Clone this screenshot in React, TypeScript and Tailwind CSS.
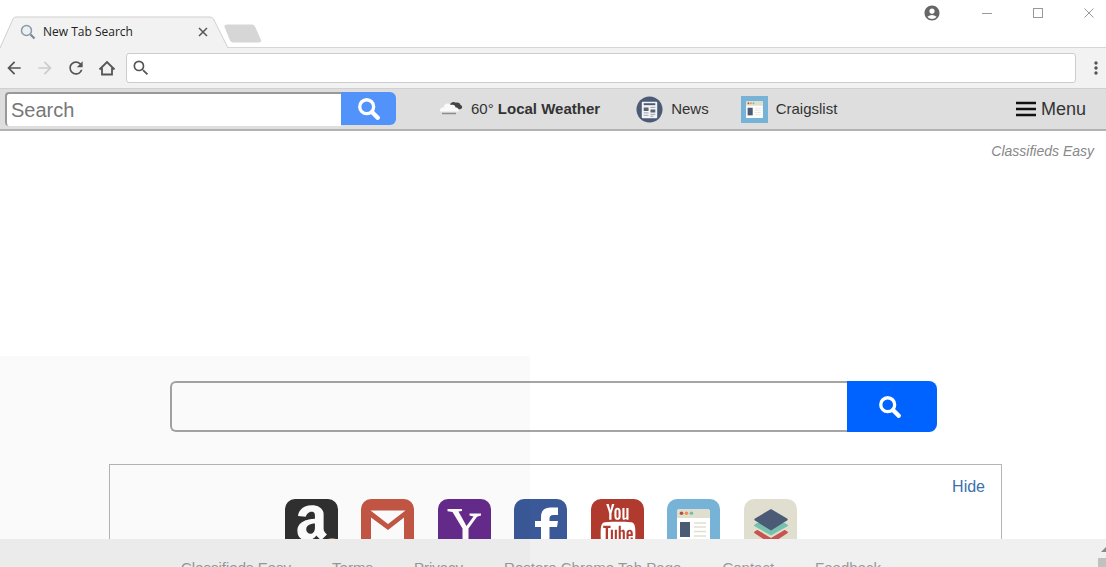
import React from 'react';
import { FaAmazon } from 'react-icons/fa';
import { TfiYoutube } from 'react-icons/tfi';
import { MdAccountCircle, MdArrowBack, MdArrowForward, MdMoreVert, MdRefresh, MdSearch } from 'react-icons/md';

const footerLinks = ['Classifieds Easy', 'Terms', 'Privacy', 'Restore Chrome Tab Page', 'Contact', 'Feedback'];

const SearchGlyph: React.FC<{ className: string }> = ({ className }) => (
  <svg viewBox="0 0 24 24" className={className} fill="none" stroke="currentColor" aria-hidden="true">
    <circle cx="9.500" cy="9.500" r="7.600" strokeWidth="3.600" />
    <path d="M15.500 15.500 21.500 21.500" strokeWidth="4.800" strokeLinecap="round" />
  </svg>
);

const WeatherIcon = () => (
  <svg viewBox="0 0 24 16" className="h-4 w-6" aria-hidden="true">
    <path d="M11 3.500C12 .8 15 .3 17 1.800c2-.6 4 .4 4.300 2 2.200.8 2.500 3 .7 4.200-3 1-7 .5-10-1.500z" fill="#454545" />
    <path d="M1 10.500c-.8-2.500 1.500-4 3.500-4C5 2.500 9.500 1 12 4c2.500-1 4.500.7 4.500 2.500 2.500 0 4 2 3 4z" fill="#fafafa" />
    <path d="M3 12.500h14" stroke="#8d8d8d" strokeWidth="1.500" />
  </svg>
);

const NewsIcon = () => (
  <svg viewBox="0 0 28 28" className="size-[27px]" aria-hidden="true">
    <circle cx="14" cy="14" r="13.500" fill="#4b5a75" />
    <rect x="6" y="6" width="16" height="17" rx="1" fill="#f2f4f6" />
    <path d="M8 8.500h12" stroke="#4b5a75" strokeWidth="2" />
    <path d="M8 12h5v3.500H8zM15 14h5v3h-5z" fill="#5c6470" />
    <path d="M15 11.800h5M8 17.500h5M8 20h5M15 19h5M15 21h3" stroke="#9aa1ab" strokeWidth="1" />
  </svg>
);

// Shared by the toolbar link and the tile; the caller sets the size
const BrowserIcon: React.FC<{ className: string }> = ({ className }) => (
  <svg viewBox="0 0 53 53" className={className} aria-hidden="true">
    <rect width="53" height="53" fill="#76b3d6" />
    <path d="M10 43V13q0-3 3-3h27q3 0 3 3v30z" fill="#fff" />
    <path d="M10 19v-6q0-3 3-3h27q3 0 3 3v6z" fill="#e0dfcf" />
    <circle cx="14.500" cy="14.300" r="1.800" fill="#b0503f" />
    <circle cx="19.500" cy="14.300" r="1.800" fill="#ef8f4c" />
    <circle cx="24.500" cy="14.300" r="1.800" fill="#74c1a0" />
    <rect x="13" y="23" width="10" height="15" fill="#4b5a75" />
    <path d="M27 24h12M27 28h12M27 32.500h12M27 37h12" stroke="#e0dfcf" strokeWidth="1.400" />
  </svg>
);

const AmazonTile = () => (
  <svg viewBox="0 0 53 53" className="size-[53px]" aria-hidden="true">
    <rect width="53" height="53" fill="#303030" />
    <FaAmazon x="0" y="3" size={53} color="#fff" />
    <path d="M41 41q5-3 10-1v3H41z" fill="#e8a765" />
  </svg>
);

const GmailTile = () => (
  <svg viewBox="0 0 53 53" className="size-[53px]" aria-hidden="true">
    <rect width="53" height="53" fill="#c55746" />
    <path d="M9.500 11.500h35L27 25z" fill="#fff" />
    <path d="M10 45V18.500L27 31l16-12.500V45z" fill="#fff" />
  </svg>
);

const YahooTile = () => (
  <svg viewBox="0 0 53 53" className="size-[53px]" aria-hidden="true">
    <rect width="53" height="53" fill="#652b8c" />
    <path
      d="M9.500 10H24v2l-3.500.6L28.500 27 35.500 17.500 31.500 16.500V14.500H43v2l-4 1.200-8.500 11.800V45h-6V29.500L14.500 13l-5-.8z"
      fill="#fff"
    />
  </svg>
);

const FacebookTile = () => (
  <svg viewBox="0 0 53 53" className="size-[53px]" aria-hidden="true">
    <rect width="53" height="53" fill="#3b5998" />
    <path d="M27 53V28h-6v-6h6v-4q0-9.500 9.500-9.500H44V16h-5q-3.500 0-3.500 3.500V22H44l-1 6h-7.500v25z" fill="#fff" />
  </svg>
);

const YoutubeTile = () => (
  <svg viewBox="0 0 53 53" className="size-[53px]" aria-hidden="true">
    <rect width="53" height="53" fill="#b03a2e" />
    <TfiYoutube x="6" y="5" size={42} color="#fff" />
  </svg>
);

const StackTile = () => (
  <svg viewBox="0 0 53 53" className="size-[53px]" aria-hidden="true">
    <rect width="53" height="53" fill="#e0dfcf" />
    <path d="M10 33l3-2h28l3 2q0 1-1 1.500L27 45 11 34.500q-1-.5-1-1.500z" fill="#c75450" />
    <path d="M10 28l3-2h28l3 2q0 1-1 1.500L27 39 11 29.500q-1-.5-1-1.500z" fill="#e0dfcf" />
    <path d="M10 26l3-2h28l3 2q0 1-1 1.500L27 36.500 11 27.500q-1-.5-1-1.500z" fill="#76c2af" />
    <path d="M27 10 43 19.500q1.500 1 0 2L27 31.500 11 21.500q-1.500-1 0-2z" fill="#4b5a75" />
  </svg>
);

const tiles = [
  { name: 'Amazon', icon: <AmazonTile /> },
  { name: 'Gmail', icon: <GmailTile /> },
  { name: 'Yahoo', icon: <YahooTile /> },
  { name: 'Facebook', icon: <FacebookTile /> },
  { name: 'YouTube', icon: <YoutubeTile /> },
  { name: 'Craigslist', icon: <BrowserIcon className="size-[53px]" /> },
  { name: 'More', icon: <StackTile /> },
];

const TitleBar = () => (
  <div className="flex h-12 items-end justify-between border-b border-[#d6d6d6] bg-white">
    <div className="-mb-px flex items-end">
      <div className="relative flex h-8 w-[228px] items-center pr-5 pl-5">
        <svg viewBox="0 0 228 32" className="absolute inset-0 h-8 w-[228px]" aria-hidden="true">
          <path d="M0 32 13 3Q14 1 16 1H210Q212 1 213.500 3L228 32" fill="#f2f2f2" stroke="#cfcfcf" />
        </svg>
        <svg viewBox="0 0 16 16" className="relative size-4" fill="none" aria-hidden="true">
          <circle cx="6.500" cy="6.500" r="5" fill="#e9f1f6" stroke="#8d9aa3" strokeWidth="1.500" />
          <path d="M10.500 10.500 14.500 14.500" stroke="#7b8790" strokeWidth="2.200" />
        </svg>
        <span className="relative ml-[7px] flex-1 font-['Open_Sans',sans-serif] text-xs text-[#222]">New Tab Search</span>
        <button aria-label="Close tab" className="relative">
          <svg viewBox="0 0 10 10" className="size-[10px]" stroke="#555" strokeWidth="1.500">
            <path d="M1 1 9 9M9 1 1 9" />
          </svg>
        </button>
      </div>
      <button aria-label="New tab" className="-ml-1 mb-1">
        <svg viewBox="0 0 38 20" className="h-5 w-[38px]">
          <path d="M3 .5H28q2 0 3 2l6 13.500q1 2.500-2 2.500H9q-2 0-3-2L.5 3Q0 .5 3 .5z" fill="#d6d6d6" />
        </svg>
      </button>
    </div>
    <div className="mr-3 flex items-center gap-[41px] self-start pt-1 text-[#999]">
      <button aria-label="Profile">
        <MdAccountCircle className="size-[18px] text-[#666]" />
      </button>
      <button aria-label="Minimize">
        <svg viewBox="0 0 10 10" className="size-[10px]" fill="none" stroke="currentColor">
          <path d="M0 5.500H10" />
        </svg>
      </button>
      <button aria-label="Maximize">
        <svg viewBox="0 0 10 10" className="size-[10px]" fill="none" stroke="currentColor">
          <rect x=".5" y=".5" width="9" height="9" />
        </svg>
      </button>
      <button aria-label="Close">
        <svg viewBox="0 0 10 10" className="size-[10px]" fill="none" stroke="currentColor">
          <path d="M.5.5 9.500 9.500M9.500.5.5 9.500" />
        </svg>
      </button>
    </div>
  </div>
);

const AddressBar = () => (
  <div className="flex h-[41px] items-center border-b border-[#d0d0d0] bg-[#f2f2f2] pl-1 text-[#555]">
    <div className="flex items-center gap-[11px]">
      <button aria-label="Back"><MdArrowBack className="size-5" /></button>
      <button aria-label="Forward"><MdArrowForward className="size-5 text-[#ccc]" /></button>
      <button aria-label="Reload"><MdRefresh className="size-5" /></button>
      <button aria-label="Home">
        <svg viewBox="0 0 20 20" className="size-5" fill="none" stroke="currentColor" strokeWidth="1.800">
          <path d="M2.500 11.500 10 4l7.500 7.500M5 10v6.500h10V10" />
        </svg>
      </button>
    </div>
    <div className="ml-[9px] flex h-[30px] flex-1 items-center rounded-[3px] border border-[#ccc] bg-white pl-1">
      <MdSearch className="size-5" />
      <input aria-label="Address" className="min-w-0 flex-1 px-2 text-sm outline-none" />
    </div>
    <button aria-label="Browser menu" className="ml-[10px]"><MdMoreVert className="size-5" /></button>
  </div>
);

const AppBar = () => (
  <div className="flex h-[42px] items-center border-b-2 border-[#b2b2b2] bg-[#dedede] pr-5 pl-[5px] text-[15px] text-[#333]">
    <form className="flex">
      <input
        type="text"
        aria-label="Search"
        placeholder="Search"
        className="h-[34px] w-[336px] rounded-l-[4px] border-t-2 border-l-2 border-[#999] bg-white px-1 text-xl outline-none placeholder:text-[#777]"
      />
      <button aria-label="Search the web" className="flex h-[33px] w-[55px] items-center justify-center rounded-r-md bg-[#5193fa] text-white">
        <SearchGlyph className="size-[22px]" />
      </button>
    </form>
    <a href="#weather" className="ml-[43px] flex items-center gap-2">
      <WeatherIcon />
      <span>60° <strong>Local Weather</strong></span>
    </a>
    <a href="#news" className="ml-9 flex items-center gap-2">
      <NewsIcon />
      News
    </a>
    <a href="#craigslist" className="ml-8 flex items-center gap-2">
      <BrowserIcon className="size-[27px]" />
      Craigslist
    </a>
    <button className="ml-auto flex items-center gap-[5px] text-lg">
      <svg viewBox="0 0 20 16" className="h-4 w-5" stroke="#111" strokeWidth="2.400">
        <path d="M0 2H20M0 8H20M0 14H20" />
      </svg>
      Menu
    </button>
  </div>
);

const App: React.FC = () => {
  return (
    <div className="relative flex h-screen flex-col overflow-hidden bg-white font-['Liberation_Sans',Arial,sans-serif]">
      <TitleBar />
      <AddressBar />
      <AppBar />
      <main className="flex min-h-0 flex-1 flex-col overflow-hidden">
        <p className="mt-[10px] mr-3 text-right text-sm text-[#888] italic">Classifieds Easy</p>
        <form className="mt-[220px] mr-[169px] ml-[170px] flex h-[51px] shrink-0">
          <input
            type="text"
            aria-label="Web search"
            className="min-w-0 flex-1 rounded-l-md border-2 border-r-0 border-[#a5a5a5] bg-white px-3 text-xl outline-none"
          />
          <button aria-label="Search" className="flex w-[90px] items-center justify-center rounded-r-lg bg-[#0062ff] pr-1 text-white">
            <SearchGlyph className="size-[22px]" />
          </button>
        </form>
        <section className="mt-8 mr-[104px] ml-[109px] h-40 shrink-0 border border-[#b5b5b5]">
          <div className="flex justify-end px-4 pt-[10px]">
            <button className="text-base text-[#3a70ae]">Hide</button>
          </div>
          <div className="flex justify-center pr-[6px]">
            <div className="grid w-[536px] grid-cols-7">
              {tiles.map((tile) => (
                <a key={tile.name} href="#tile" aria-label={tile.name} className="size-[53px] overflow-hidden rounded-[10px]">
                  {tile.icon}
                </a>
              ))}
            </div>
          </div>
        </section>
      </main>
      <footer className="flex h-7 shrink-0 justify-between bg-[#f0f0f0]">
        <nav className="ml-[181px] flex gap-[41px] pt-[18px] text-[15px] text-[#999]">
          {footerLinks.map((label) => (
            <a key={label} href="#footer" className="whitespace-nowrap">{label}</a>
          ))}
        </nav>
        <div className="flex w-2 flex-col justify-between pt-2">
          <svg viewBox="0 0 8 5" className="h-[5px] w-2" aria-hidden="true">
            <path d="M3 5 8 0V5z" fill="#888" />
          </svg>
          <div className="h-[9px] bg-[#c1c1c1]" />
        </div>
      </footer>
      {/* faint shade over the lower left corner */}
      <div className="pointer-events-none absolute bottom-0 left-0 h-[211px] w-[530px] bg-black/2" />
    </div>
  );
};

export default App;
